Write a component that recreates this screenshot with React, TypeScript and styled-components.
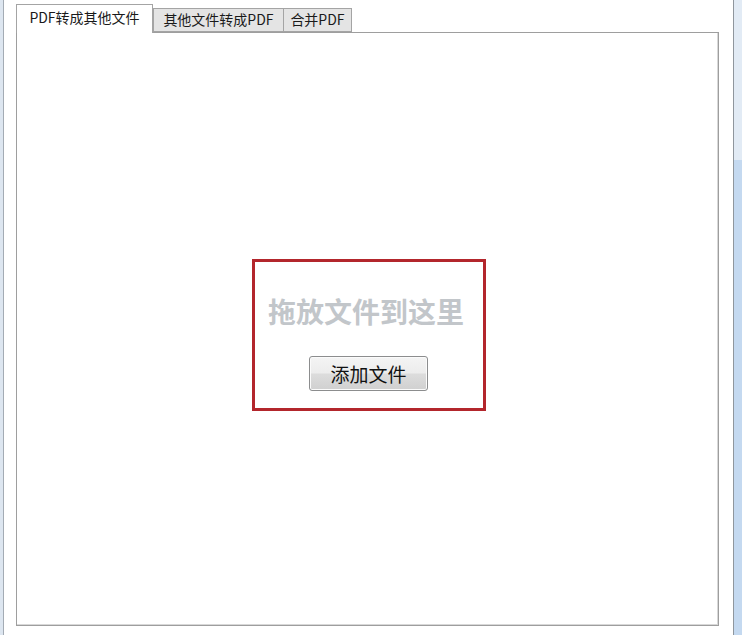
import { FC, useState } from "react";
import styled, { createGlobalStyle } from "styled-components";

const GlobalStyle = createGlobalStyle`
  html, body {
    margin: 0;
    padding: 0;
    background: #ffffff;
  }
  body {
    font-family: "Noto Sans CJK SC", "Noto Sans", sans-serif;
  }
`;

const tabs = [
  { title: "PDF转成其他文件", width: 137 },
  { title: "其他文件转成PDF", width: 131 },
  { title: "合并PDF", width: 69 },
];

const App: FC = () => {
  const [active, setActive] = useState(0);

  return (
    <>
      <GlobalStyle />
      <WindowFrame>
        <LeftEdge />
        <Main>
          <TabBar>
            {tabs.map((t, i) => (
              <Tab
                key={t.title}
                $active={i === active}
                $width={t.width}
                onClick={() => setActive(i)}
              >
                {t.title}
              </Tab>
            ))}
          </TabBar>
          <Panel>
            <DropZone>
              <DropHint>拖放文件到这里</DropHint>
              <AddButton type="button">添加文件</AddButton>
            </DropZone>
          </Panel>
        </Main>
        <RightEdge>
          <RightEdgeTop />
        </RightEdge>
      </WindowFrame>
    </>
  );
};

const WindowFrame = styled.div`
  display: flex;
  width: 742px;
  height: 635px;
  background: #ffffff;
`;

const LeftEdge = styled.div`
  width: 3px;
  background: #dde6f0;
  border-right: 1px solid #a3abb4;
`;

const Main = styled.div`
  flex: 1;
  display: flex;
  flex-direction: column;
  padding: 4px 14px 9px 12px;
`;

const TabBar = styled.div`
  display: flex;
  align-items: flex-end;
  height: 28px;
  position: relative;
  z-index: 1;
`;

const Tab = styled.div<{ $active: boolean; $width: number }>`
  box-sizing: border-box;
  width: ${(p) => p.$width}px;
  height: ${(p) => (p.$active ? 29 : 24)}px;
  margin-bottom: ${(p) => (p.$active ? -1 : 0)}px;
  margin-right: ${(p) => (p.$active ? 0 : -1)}px;
  border: 1px solid #a4a4a4;
  border-bottom: ${(p) => (p.$active ? "none" : "1px solid #a4a4a4")};
  background: ${(p) => (p.$active ? "#ffffff" : "#e4e4e4")};
  color: #1a1a1a;
  font-size: 14px;
  line-height: ${(p) => (p.$active ? 24 : 21)}px;
  text-align: center;
  white-space: nowrap;
  cursor: default;
`;

const Panel = styled.div`
  flex: 1;
  display: flex;
  align-items: center;
  justify-content: center;
  border: 1px solid #9e9e9e;
  box-shadow: inset -1px -1px 0 #d8d8d8;
  padding: 11px 0 0 2px;
`;

const DropZone = styled.div`
  box-sizing: border-box;
  width: 234px;
  height: 152px;
  border: 3px solid #b3262c;
  display: flex;
  flex-direction: column;
  align-items: center;
  padding-top: 32px;
  gap: 28px;
`;

const DropHint = styled.div`
  font-size: 28px;
  line-height: 34px;
  font-weight: 700;
  color: #c2c6ca;
  margin-right: 5px;
`;

const AddButton = styled.button`
  box-sizing: border-box;
  width: 119px;
  height: 35px;
  padding: 0;
  border: 1px solid #8c8d8e;
  border-radius: 3px;
  background: linear-gradient(
    to bottom,
    #f4f4f4 0%,
    #ececec 48%,
    #dcdcdc 52%,
    #d0d0d0 100%
  );
  box-shadow: inset 0 0 0 1px #fbfbfb;
  font-family: "Noto Sans CJK SC", "Noto Sans", sans-serif;
  font-size: 19px;
  color: #111111;
  cursor: default;
`;

const RightEdge = styled.div`
  width: 8px;
  border-left: 1px solid #8f969d;
  background: #c4d9f0;
  display: flex;
  flex-direction: column;
`;

const RightEdgeTop = styled.div`
  height: 160px;
  background: #e2ebf5;
`;

export default App;
